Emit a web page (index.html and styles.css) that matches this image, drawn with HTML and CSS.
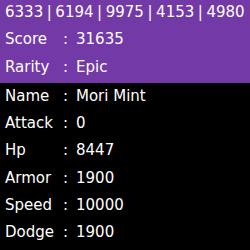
FILE: index.html
```html
<!DOCTYPE html>
<html lang="en">

<head>
  <meta charset="UTF-8">
  <meta name="viewport" content="width=device-width, initial-scale=1.0">
  <title>Mori Mint</title>
  <link rel="stylesheet" href="styles.css">
</head>

<body>
  <div class="card">
    <div class="head">
      <p class="ids">6333 | 6194 | 9975 | 4153 | 4980</p>
      <div class="stats">
        <span>Score</span><span>:</span><span>31635</span>
        <span>Rarity</span><span>:</span><span>Epic</span>
      </div>
    </div>

    <div class="stats body">
      <span>Name</span><span>:</span><span>Mori Mint</span>
      <span>Attack</span><span>:</span><span>0</span>
      <span>Hp</span><span>:</span><span>8447</span>
      <span>Armor</span><span>:</span><span>1900</span>
      <span>Speed</span><span>:</span><span>10000</span>
      <span>Dodge</span><span>:</span><span>1900</span>
    </div>
  </div>
</body>

</html>
```

FILE: styles.css
```css
body {
  margin: 0;
  background-color: #000000;
  color: #ffffff;
  font-family: "DejaVu Sans", sans-serif;
  font-size: 15px;
}

.card {
  width: 250px;
  height: 250px;
  overflow: hidden;
}

.head {
  background-color: #7339a6;
  padding-bottom: 2px;
}

.ids {
  margin: -1px 0 0;
  padding-left: 5px;
  line-height: 27.4px;
  white-space: nowrap;
  word-spacing: -1.2px;
}

.stats {
  display: grid;
  grid-template-columns: 58px 13px auto;
  padding-left: 5px;
  line-height: 27.4px;
}

.body {
  line-height: 27.1px;
}
```
